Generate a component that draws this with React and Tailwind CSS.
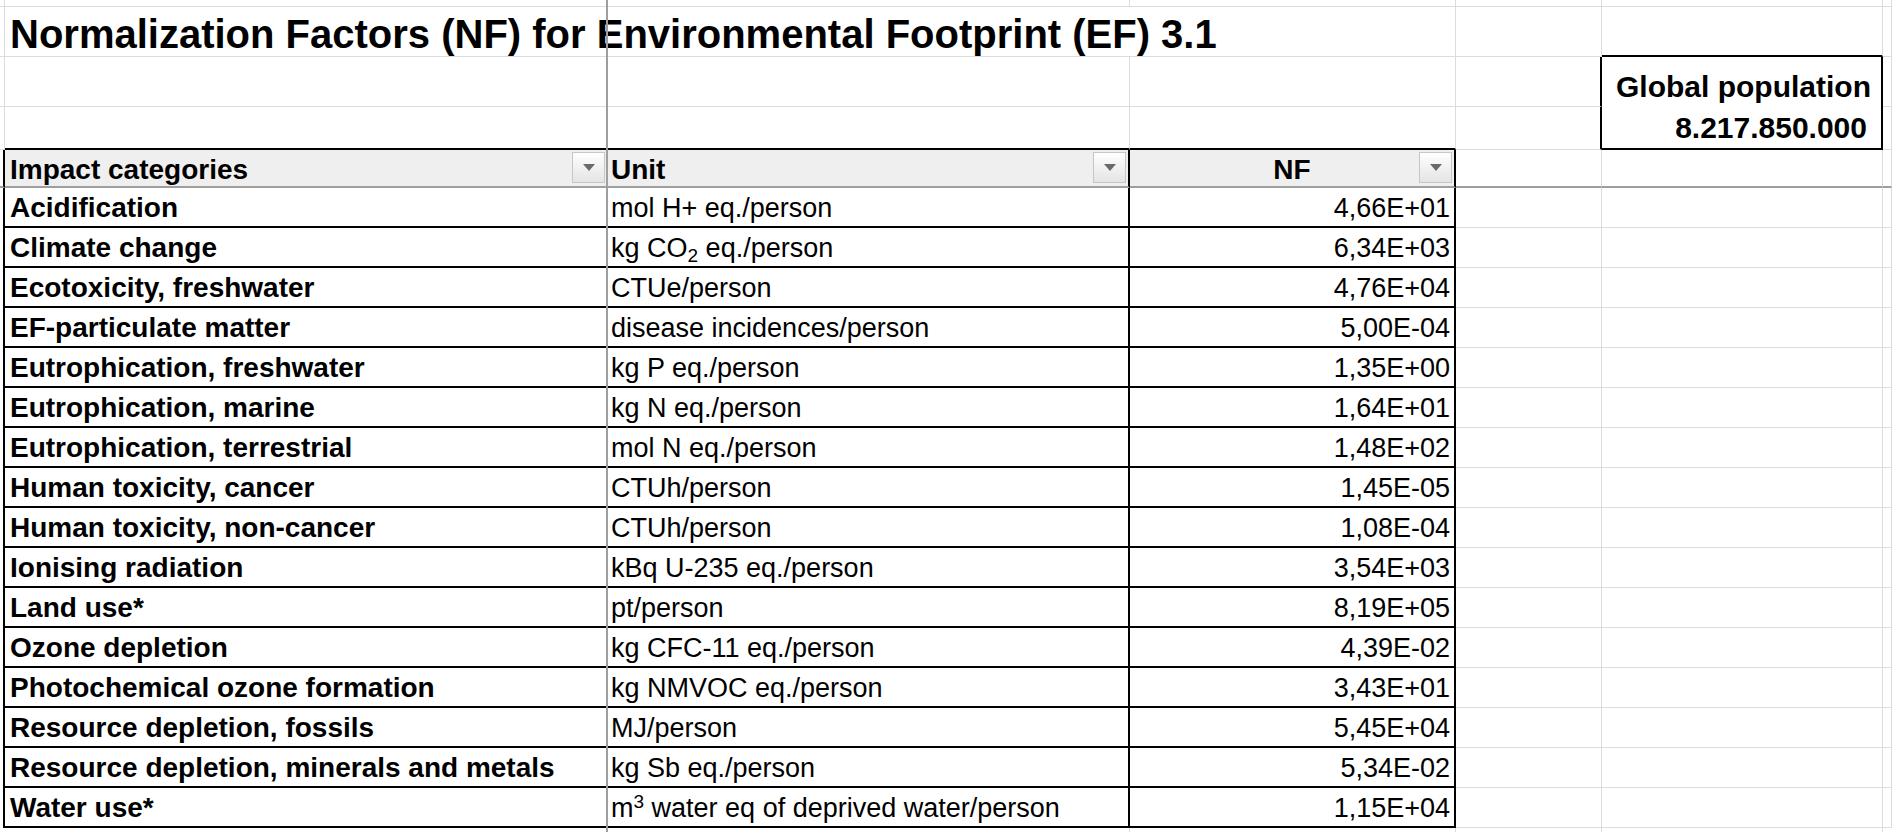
import React from "react";

const rows = [
  ["Acidification", "mol H+ eq./person", "4,66E+01"],
  ["Climate change", <>kg CO<sub className="text-[19px]">2</sub> eq./person</>, "6,34E+03"],
  ["Ecotoxicity, freshwater", "CTUe/person", "4,76E+04"],
  ["EF-particulate matter", "disease incidences/person", "5,00E-04"],
  ["Eutrophication, freshwater", "kg P eq./person", "1,35E+00"],
  ["Eutrophication, marine", "kg N eq./person", "1,64E+01"],
  ["Eutrophication, terrestrial", "mol N eq./person", "1,48E+02"],
  ["Human toxicity, cancer", "CTUh/person", "1,45E-05"],
  ["Human toxicity, non-cancer", "CTUh/person", "1,08E-04"],
  ["Ionising radiation", "kBq U-235 eq./person", "3,54E+03"],
  ["Land use*", "pt/person", "8,19E+05"],
  ["Ozone depletion", "kg CFC-11 eq./person", "4,39E-02"],
  ["Photochemical ozone formation", "kg NMVOC eq./person", "3,43E+01"],
  ["Resource depletion, fossils", "MJ/person", "5,45E+04"],
  ["Resource depletion, minerals and metals", "kg Sb eq./person", "5,34E-02"],
  ["Water use*", <>m<sup className="text-[19px]">3</sup> water eq of deprived water/person</>, "1,15E+04"],
];

// plain spreadsheet gridline cell
const grid = "border-r border-b border-[#dcdcdc]";

const Dropdown = () => (
  <div className="absolute right-[2px] top-[2px] w-[33px] h-[31px] border border-[#c6c6c6] bg-linear-to-b from-white to-[#e4e4e4] flex items-center justify-center">
    <div className="w-0 h-0 border-l-[6px] border-r-[6px] border-t-[7px] border-l-transparent border-r-transparent border-t-[#6a6a6a]" />
  </div>
);

export default function App() {
  return (
    <div className="relative w-[1892px] h-[832px] overflow-hidden bg-white text-black font-['Liberation_Sans',Arial,sans-serif]">
      <div className="grid h-full grid-cols-[5px_602px_523px_326px_146px_281px_1fr] grid-rows-[7px_50px_50px_43px_38px_repeat(16,40px)_1fr]">
        {/* row 0 */}
        <div className={grid} />
        <div className="border-b border-[#dcdcdc]" />
        <div className={grid} />
        <div className={grid} />
        <div className={grid} />
        <div className={grid} />
        <div className={grid} />

        {/* title row */}
        <div className={grid} />
        <div className="border-b border-[#dcdcdc] flex items-end pl-[5px] pb-[2px]">
          <span className="whitespace-nowrap text-[40px] leading-[40px] font-bold">
            Normalization Factors (NF) for Environmental Footprint (EF) 3.1
          </span>
        </div>
        <div className="border-b border-[#dcdcdc]" />
        <div className={grid} />
        <div className={grid} />
        <div className="border-r border-[#dcdcdc] border-b-2 border-b-black" />
        <div className={grid} />

        {/* row 2 */}
        <div className={grid} />
        <div className="border-b border-[#dcdcdc]" />
        <div className={grid} />
        <div className={grid} />
        <div className="border-b border-[#dcdcdc] border-r-2 border-r-black" />
        <div className="border-r-2 border-black flex items-end justify-end pr-[10px] pb-[5px] text-[30px] leading-[30px] font-bold whitespace-nowrap">
          Global population
        </div>
        <div className={grid} />

        {/* row 3 */}
        <div className={grid} />
        <div className="border-b-2 border-black" />
        <div className="border-r border-r-[#dcdcdc] border-b-2 border-b-black" />
        <div className="border-r border-r-[#dcdcdc] border-b-2 border-b-black" />
        <div className="border-b border-[#dcdcdc] border-r-2 border-r-black" />
        <div className="border-r-2 border-b-2 border-black flex items-end justify-end pr-[14px] pb-[5px] text-[30px] leading-[30px] font-bold">
          8.217.850.000
        </div>
        <div className={grid} />

        {/* header row */}
        <div className="border-r-2 border-r-black border-b-2 border-b-[#9e9e9e]" />
        <div className="relative bg-[#efefef] border-b-2 border-[#9e9e9e] flex items-end pl-[5px] pb-[2px] text-[28px] leading-[28px] font-bold">
          Impact categories
          <Dropdown />
        </div>
        <div className="relative bg-[#efefef] border-r-2 border-r-black border-b-2 border-b-[#9e9e9e] flex items-end pl-[4px] pb-[2px] text-[28px] leading-[28px] font-bold">
          Unit
          <Dropdown />
        </div>
        <div className="relative bg-[#efefef] border-r-2 border-r-black border-b-2 border-b-[#9e9e9e] flex items-end justify-center pb-[2px] text-[28px] leading-[28px] font-bold">
          NF
          <Dropdown />
        </div>
        <div className="border-r border-r-[#dcdcdc] border-b-2 border-b-[#9e9e9e]" />
        <div className="border-r border-r-[#dcdcdc] border-b-2 border-b-[#9e9e9e]" />
        <div className="border-r border-r-[#dcdcdc] border-b-2 border-b-[#9e9e9e]" />

        {/* data rows */}
        {rows.map(([cat, unit, nf], i) => (
          <React.Fragment key={i}>
            <div className="border-r-2 border-black" />
            <div className="border-b-2 border-black flex items-end pl-[5px] pb-[4px] text-[28px] leading-[28px] font-bold whitespace-nowrap">
              {cat}
            </div>
            <div className="border-r-2 border-b-2 border-black flex items-end pl-[4px] pb-[4px] text-[27px] leading-[27px] whitespace-nowrap">
              <span>{unit}</span>
            </div>
            <div className="border-r-2 border-b-2 border-black flex items-end justify-end pr-[4px] pb-[4px] text-[27px] leading-[27px]">
              {nf}
            </div>
            <div className={grid} />
            <div className={grid} />
            <div className={grid} />
          </React.Fragment>
        ))}

        {/* below the table */}
        <div />
        <div />
        <div className="border-r border-[#dcdcdc]" />
        <div className="border-r border-[#dcdcdc]" />
        <div className="border-r border-[#dcdcdc]" />
        <div className="border-r border-[#dcdcdc]" />
        <div />
      </div>

      {/* frozen pane divider */}
      <div className="absolute left-[606px] top-0 w-[2px] h-full bg-[#9e9e9e]" />
    </div>
  );
}
